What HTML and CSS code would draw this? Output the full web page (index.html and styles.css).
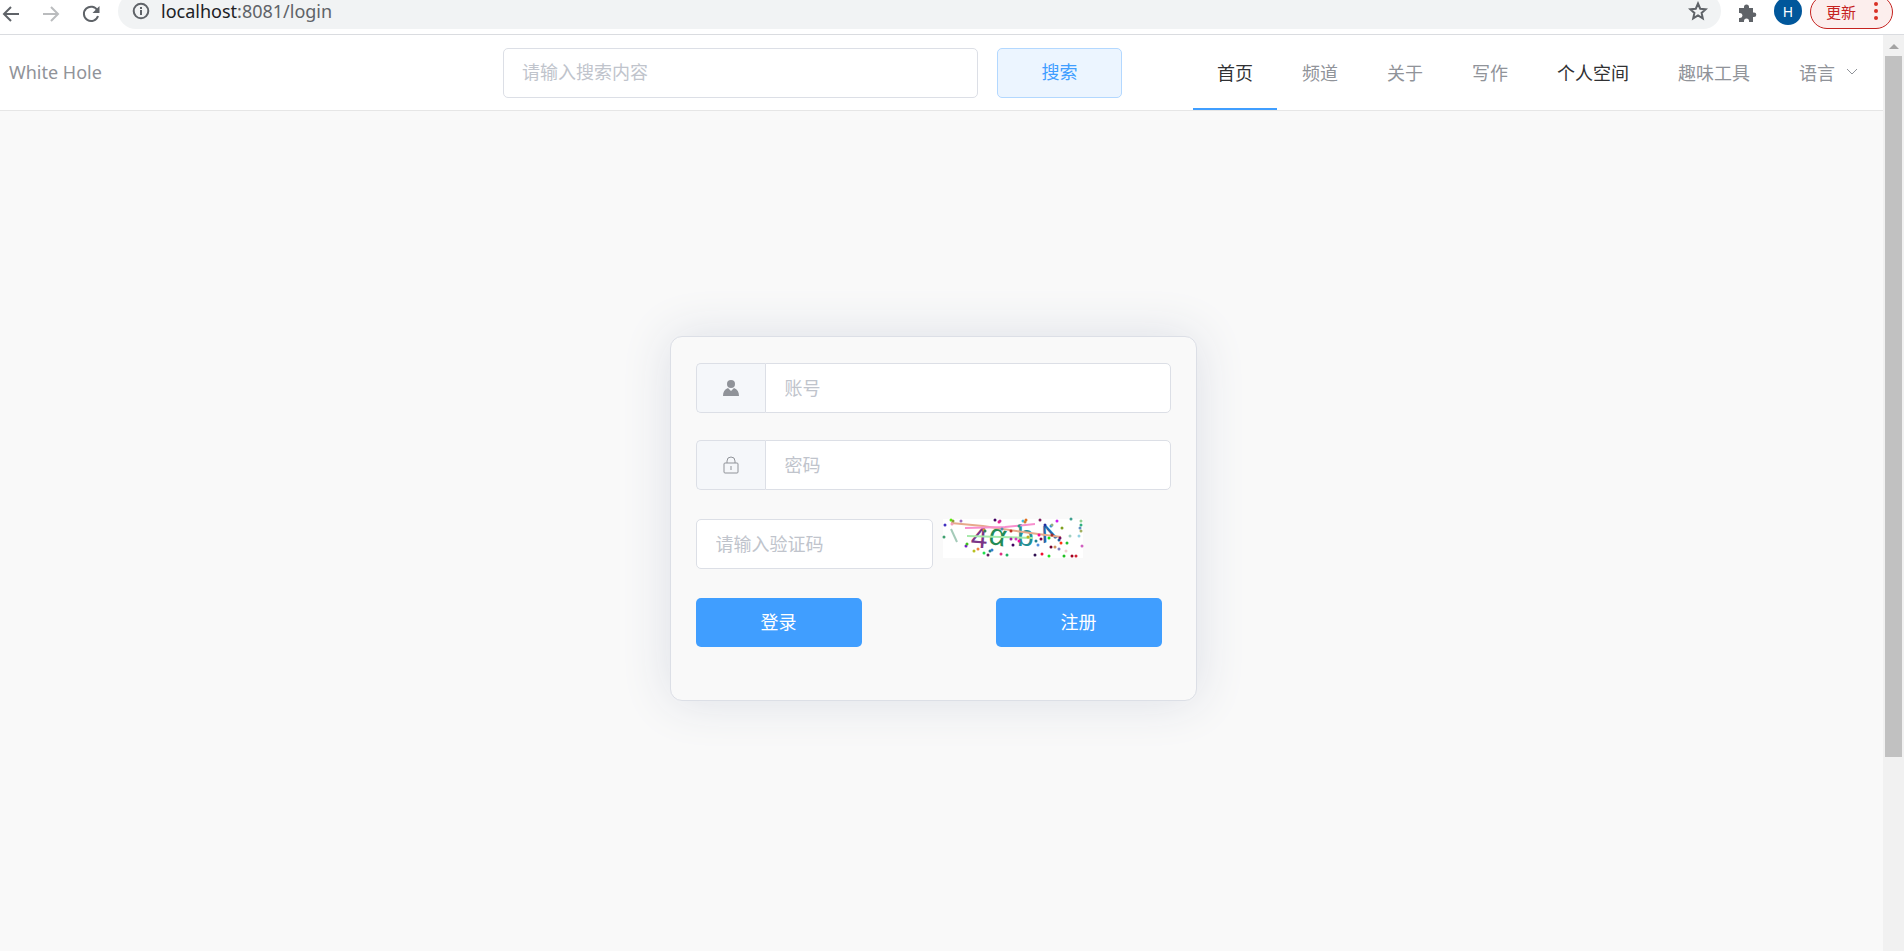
FILE: index.html
```html
<!DOCTYPE html>
<html lang="zh-CN">
<head>
    <meta charset="UTF-8">
    <meta name="viewport" content="width=device-width, initial-scale=1.0">
    <title>White Hole</title>
    <link rel="stylesheet" href="styles.css">
</head>
<body>

<div class="toolbar">
    <button class="tool back" aria-label="后退">
        <svg width="18" height="18" viewBox="0 0 18 18"><path d="M17 9H2M9 2L2 9l7 7" fill="none" stroke="#5f6368" stroke-width="2"/></svg>
    </button>
    <button class="tool forward" aria-label="前进">
        <svg width="18" height="18" viewBox="0 0 18 18"><path d="M1 9h15M9 2l7 7-7 7" fill="none" stroke="#babcbe" stroke-width="2"/></svg>
    </button>
    <button class="tool reload" aria-label="刷新">
        <svg width="18" height="18" viewBox="0 0 18 18"><path d="M15.500 5.500A7.200 7.200 0 1 0 16 11" fill="none" stroke="#5f6368" stroke-width="2"/><path d="M17.500 1v7h-7z" fill="#5f6368"/></svg>
    </button>
    <div class="address">
        <svg width="18" height="18" viewBox="0 0 18 18"><circle cx="9" cy="9" r="7.300" fill="none" stroke="#5f6368" stroke-width="2"/><path d="M9 8v5M9 5v2" stroke="#5f6368" stroke-width="2"/></svg>
        <div class="url" role="textbox" aria-label="地址"><span class="host">localhost</span>:8081/login</div>
        <button class="tool" aria-label="收藏">
            <svg width="20" height="20" viewBox="0 0 20 20"><path d="M10 2.500l2.200 5.200 5.600.5-4.200 3.700 1.200 5.500L10 14.500l-4.800 2.900 1.200-5.500-4.200-3.700 5.600-.5z" fill="none" stroke="#5f6368" stroke-width="2"/></svg>
        </button>
    </div>
    <button class="tool extensions" aria-label="扩展程序">
        <svg width="19" height="19" viewBox="0 0 19 19"><path d="M1 4h5V3a2.300 2.300 0 0 1 5 0v1h4v4.500h1a2.300 2.300 0 0 1 0 4.600h-1V18h-4v-1a2.400 2.400 0 0 0-5 0v1H1v-4h1a2.500 2.500 0 0 0 0-5H1z" fill="#5f6368"/></svg>
    </button>
    <button class="avatar">H</button>
    <button class="update">更新
        <svg width="4" height="18" viewBox="0 0 4 18"><g fill="#d93025"><circle cx="2" cy="2" r="2"/><circle cx="2" cy="9" r="2"/><circle cx="2" cy="16" r="2"/></g></svg>
    </button>
</div>

<div class="window">
    <div class="page">
        <header class="header">
            <a class="brand" href="#">White Hole</a>
            <input class="input" type="text" aria-label="搜索" placeholder="请输入搜索内容">
            <button class="search-button">搜索</button>
            <nav class="menu">
                <a class="active" href="#">首页</a>
                <a href="#">频道</a>
                <a href="#">关于</a>
                <a href="#">写作</a>
                <a class="dark" href="#">个人空间</a>
                <a href="#">趣味工具</a>
                <a href="#">语言
                    <svg width="12" height="8" viewBox="0 0 12 8"><path d="M1 1l5 5 5-5" fill="none" stroke="#909399"/></svg>
                </a>
            </nav>
        </header>

        <main class="main">
            <form class="login">
                <div class="group">
                    <label class="prepend" for="account" aria-label="账号">
                        <svg width="16" height="16" viewBox="0 0 16 16"><circle cx="8" cy="4" r="4" fill="#909399"/><path d="M0 16c0-4 1.500-6.500 5-8l3 3 3-3c3.500 1.500 5 4 5 8z" fill="#909399"/></svg>
                    </label>
                    <input class="input" id="account" type="text" placeholder="账号">
                </div>
                <div class="group">
                    <label class="prepend" for="password" aria-label="密码">
                        <svg width="16" height="18" viewBox="0 0 16 18"><path d="M2 7h12q1 0 1 1v8q0 1-1 1H2q-1 0-1-1V8q0-1 1-1zM4 7V5a4 4 0 0 1 8 0v2M8 10v4" fill="none" stroke="#909399"/></svg>
                    </label>
                    <input class="input" id="password" type="password" placeholder="密码">
                </div>
                <div class="captcha-row">
                    <input class="input" type="text" aria-label="验证码" placeholder="请输入验证码">
                    <svg class="captcha" width="140" height="39" viewBox="0 0 140 39">
                        <rect width="140" height="39" fill="#fff"/>
                        <g fill="none" stroke-width="2">
                            <path d="M8 10l6 13" stroke="#a5cbb9"/>
                            <text x="28" y="29" class="code" fill="#7b3588" transform="rotate(5 38 20)">4</text>
                            <text x="46" y="26" class="code" fill="#238b55" transform="rotate(12 54 18)">α</text>
                            <text x="74" y="27" class="code" fill="#258f94">b</text>
                            <text x="98" y="22" class="code" fill="#2668a8" transform="rotate(158 105 14)">v</text>
                            <path d="M8 4l32 3 40 6 38 5" stroke="#e7a98b"/>
                            <path d="M22 9l40-1 30-3" stroke="#f88fce"/>
                            <path d="M24 17l66 2" stroke="#a7eaaa"/>
                        </g>
                        <g id="dots"></g>
                    </svg>
                </div>
                <div class="buttons">
                    <button type="button">登录</button>
                    <button type="button">注册</button>
                </div>
            </form>
        </main>
    </div>

    <div class="scrollbar">
        <svg width="10" height="5" viewBox="0 0 10 5"><path d="M0 5l5-5 5 5z" fill="#a3a3a3"/></svg>
        <div class="thumb"></div>
    </div>
</div>

<script>
    // Noise dots of the verification code: x, y, colour
    const dots = [
        [7, 1, "#5aec0c"], [9, 2, "#8a9a38"], [17, 2, "#a06cc0"], [1, 6, "#4030c0"], [8, 5, "#f5a0bb"],
        [0, 18, "#40a070"], [22, 27, "#7720c8"], [23, 25, "#40c020"], [30, 32, "#b8c020"], [34, 30, "#f08040"],
        [40, 34, "#20e050"], [44, 36, "#602060"], [46, 32, "#208080"], [48, 31, "#3080d0"], [57, 35, "#e03080"],
        [63, 36, "#20b060"], [51, 1, "#400060"], [55, 3, "#f02090"], [56, 2, "#d030a0"], [58, 10, "#5090b0"],
        [40, 11, "#f09020"], [41, 12, "#308060"], [67, 12, "#c03020"], [67, 20, "#a020a0"], [72, 20, "#d040c0"],
        [69, 26, "#400060"], [75, 22, "#f010a0"], [79, 2, "#40c0e0"], [81, 3, "#d08030"], [82, 1, "#e07020"],
        [84, 18, "#c0b020"], [75, 7, "#20a080"], [92, 22, "#208090"], [94, 26, "#5090e0"], [91, 36, "#301050"],
        [98, 35, "#f01030"], [96, 1, "#802060"], [95, 16, "#f010a0"], [97, 20, "#800040"], [101, 6, "#2030a0"],
        [105, 19, "#10e010"], [105, 37, "#20e020"], [107, 28, "#700030"], [108, 16, "#a03030"], [107, 7, "#3090e0"],
        [108, 6, "#90b080"], [111, 28, "#d09060"], [113, 2, "#d020f0"], [115, 30, "#8080c0"], [115, 21, "#2060a0"],
        [116, 19, "#701060"], [117, 24, "#ff3010"], [118, 9, "#80a020"], [123, 24, "#20c030"], [122, 32, "#f0d0d0"],
        [120, 37, "#20c020"], [128, 37, "#a00020"], [132, 37, "#d02030"], [127, 0, "#40a090"], [126, 17, "#a0d0c0"],
        [137, 2, "#90d090"], [137, 6, "#30b080"], [137, 12, "#a0b060"], [135, 17, "#90d0e0"], [138, 27, "#d060c0"],
        [136, 9, "#6090c0"]
    ];
    document.getElementById("dots").innerHTML = dots
        .map(([x, y, color]) => `<circle cx="${x + 1}" cy="${y}" r="1.500" fill="${color}"/>`)
        .join("");
</script>

</body>
</html>
```

FILE: styles.css
```css
* {
    box-sizing: border-box;
}

body {
    display: flex;
    flex-direction: column;
    height: 100vh;
    margin: 0;
    overflow: hidden;
    background-color: #fff;
    font-family: "Noto Sans", "Noto Sans CJK SC", sans-serif;
    font-size: 18px;
    color: #909399;
}

button, input {
    font: inherit;
}

button {
    padding: 0 0 3px;
    border: none;
    cursor: pointer;
}

a {
    color: inherit;
    text-decoration: none;
}

svg {
    display: block;
    flex: none;
}

/* browser toolbar */
.toolbar {
    display: flex;
    align-items: flex-end;
    height: 35px;
    padding: 0 11px 5px 2px;
    border-bottom: 1px solid #dadce0;
}

.tool {
    padding: 0;
    background: none;
}

.back, .forward, .reload {
    height: 28px;
    margin-right: 22px;
    padding-bottom: 2px;
}

.reload {
    margin-right: 18px;
}

.address {
    display: flex;
    flex: 1;
    align-items: center;
    height: 36px;
    padding: 0 13px 0 14px;
    border-radius: 18px;
    background-color: #f1f3f4;
}

.url {
    flex: 1;
    margin-left: 11px;
    color: #5f6368;
}

.host {
    color: #202124;
}

.extensions {
    height: 28px;
    margin: 0 17px;
    padding-bottom: 4px;
}

.avatar {
    width: 28px;
    height: 28px;
    margin: 0 8px 4px 0;
    padding: 0;
    border-radius: 50%;
    background-color: #01579b;
    font-size: 14px;
    color: #fff;
}

.update {
    display: flex;
    align-items: center;
    gap: 18px;
    height: 34px;
    padding: 0 14px 2px 15px;
    border: 1px solid #c5221f;
    border-radius: 17px;
    background-color: #fceeed;
    font-size: 15px;
    color: #c5221f;
}

/* page area */
.window {
    display: flex;
    flex: 1;
    min-height: 0;
}

.page {
    flex: 1;
    background-color: #f9f9f9;
}

.header {
    display: grid;
    grid-template-columns: 1fr 475px 125px auto;
    column-gap: 19px;
    align-items: center;
    height: 76px;
    padding: 0 1px 0 9px;
    border-bottom: 1px solid #e6e6e6;
    background-color: #fff;
}

.brand {
    padding-bottom: 2px;
}

.input {
    width: 100%;
    min-width: 0;
    height: 50px;
    padding: 0 18px 1px;
    border: 1px solid #dcdfe6;
    border-radius: 5px;
    outline: none;
    background-color: #fff;
    color: #606266;
}

.input::placeholder {
    color: #c0c4cc;
}

.search-button {
    height: 50px;
    border: 1px solid #b3d8ff;
    border-radius: 5px;
    background-color: #ecf5ff;
    color: #409eff;
}

.menu {
    display: flex;
    gap: 1px;
    align-self: stretch;
    margin-left: 52px;
}

.menu a {
    display: flex;
    align-items: center;
    gap: 11px;
    padding: 0 24px;
    border-bottom: 2px solid transparent;
}

.menu .active {
    border-bottom-color: #409eff;
    color: #303133;
}

.menu .dark {
    color: #303133;
}

/* login card */
.main {
    padding: 225px 17px 0 0;
}

.login {
    width: 527px;
    margin: 0 auto;
    padding: 26px 25px 53px;
    border: 1px solid #dcdfe6;
    border-radius: 12px;
    background-color: #f9f9f9;
    box-shadow: 0 0 50px #dcdfe6;
}

.login .input {
    padding-left: 19px;
}

.group {
    display: flex;
    margin-bottom: 27px;
}

.group .input {
    border-radius: 0 5px 5px 0;
}

.prepend {
    display: flex;
    flex: none;
    align-items: center;
    justify-content: center;
    width: 69px;
    border: 1px solid #dcdfe6;
    border-right: none;
    border-radius: 5px 0 0 5px;
    background-color: #f5f7fa;
}

.captcha-row {
    display: flex;
    align-items: flex-start;
    gap: 10px;
    margin: 29px 0;
}

.captcha-row .input {
    width: 237px;
}

.captcha {
    overflow: visible;
}

.code {
    font-family: "Liberation Sans", sans-serif;
    font-size: 30px;
}

.buttons {
    display: flex;
    justify-content: space-between;
    padding-right: 9px;
}

.buttons button {
    width: 166px;
    height: 49px;
    border-radius: 5px;
    background-color: #409eff;
    color: #fff;
}

/* scrollbar */
.scrollbar {
    display: flex;
    flex-direction: column;
    align-items: center;
    width: 21px;
    padding-top: 9px;
    background-color: #f1f1f1;
}

.thumb {
    width: 17px;
    height: calc(77% + 3px);
    margin-top: 7px;
    background-color: #c1c1c1;
}
```
